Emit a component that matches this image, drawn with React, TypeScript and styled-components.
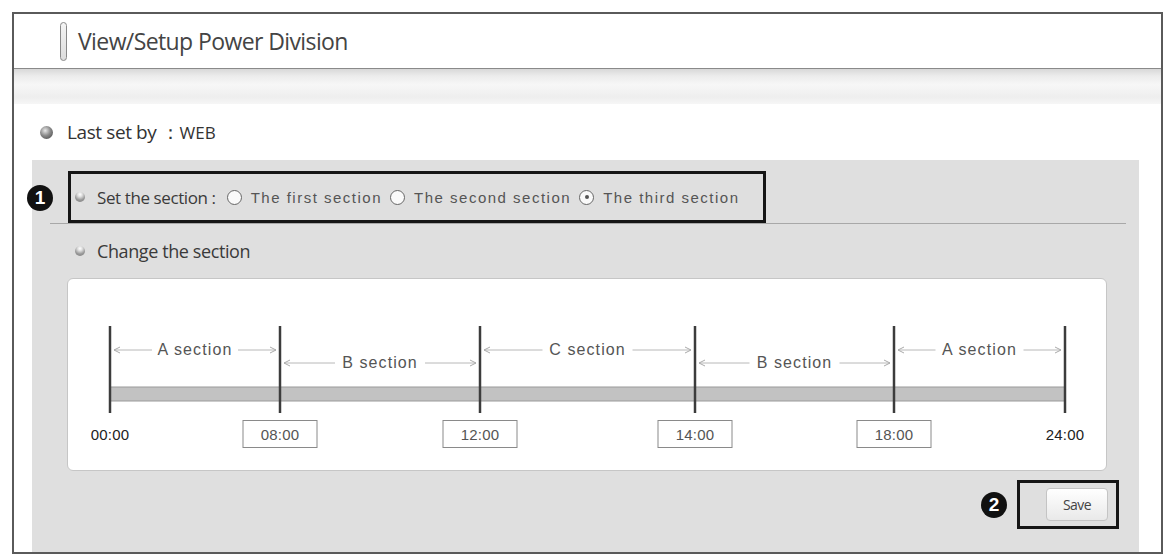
import React from 'react';
import styled, { createGlobalStyle } from 'styled-components';

const GlobalStyle = createGlobalStyle`
  body {
    margin: 0;
    background: #ffffff;
    font-family: "Open Sans", "Noto Sans", sans-serif;
    color: #333;
  }
`;

const Frame = styled.div`
  box-sizing: border-box;
  width: 1151px;
  height: 542px;
  margin: 12px 0 0 12px;
  border: 2px solid #5a5a5a;
  display: flex;
  flex-direction: column;
  background: #fff;
`;

const Header = styled.div`
  height: 54px;
  display: flex;
  align-items: center;
  gap: 11px;
  padding-left: 46px;
  border-bottom: 1px solid #8a8a8a;
`;

const TitlePill = styled.div`
  width: 5px;
  height: 37px;
  border: 1px solid #888;
  border-radius: 4px;
  background: linear-gradient(to bottom, #f4f4f4, #dcdcdc);
`;

const Title = styled.h1`
  margin: 0;
  font-size: 23px;
  font-weight: 400;
  letter-spacing: -0.6px;
  color: #444;
`;

const Band = styled.div`
  height: 35px;
  background: linear-gradient(
    to bottom,
    #d8d8d8 0%,
    #ececec 20%,
    #f7f7f7 45%,
    #eeeeee 80%,
    #f6f6f6 100%
  );
`;

const LastSetRow = styled.div`
  height: 56px;
  display: flex;
  align-items: center;
  gap: 14px;
  padding-left: 26px;
  font-size: 19px;
  letter-spacing: -0.4px;
  color: #333;
`;

const Small = styled.span`
  font-size: 17px;
  letter-spacing: 0;
`;

const Sphere = styled.span<{ $size: number; $tone: 'dark' | 'light' }>`
  display: inline-block;
  flex: none;
  width: ${(p) => p.$size}px;
  height: ${(p) => p.$size}px;
  border-radius: 50%;
  background: ${(p) =>
    p.$tone === 'dark'
      ? 'radial-gradient(circle at 40% 35%, #e8e8e8 0%, #8a8a8a 45%, #3e3e3e 100%)'
      : 'radial-gradient(circle at 50% 25%, #ffffff 0%, #e0e0e0 25%, #9a9a9a 60%, #7a7a7a 100%)'};
`;

const Panel = styled.div`
  position: relative;
  flex: 1;
  margin: 0 22px 0 18px;
  background: #dfdfdf;
  display: flex;
  flex-direction: column;
`;

const Badge = styled.span<{ $floating?: boolean }>`
  ${(p) => (p.$floating ? 'position: absolute; left: -5px; top: 25px;' : '')}
  width: 26px;
  height: 26px;
  border-radius: 50%;
  background: #111;
  color: #fff;
  display: flex;
  align-items: center;
  justify-content: center;
  font-family: "Liberation Sans", Arial, sans-serif;
  font-weight: 700;
  font-size: 19px;
`;

const SectionBox = styled.div`
  box-sizing: border-box;
  width: 698px;
  height: 52px;
  margin: 11px 0 0 36px;
  border: 3px solid #151515;
  display: flex;
  align-items: center;
  padding-left: 4px;
`;

const RowLabel = styled.span<{ $size: number }>`
  display: inline-flex;
  align-items: center;
  gap: 12px;
  font-size: ${(p) => p.$size}px;
  letter-spacing: -0.4px;
  color: #3a3a3a;
`;

const Option = styled.label`
  display: inline-flex;
  align-items: center;
  gap: 9px;
  margin-left: 8px;
  font-family: "Liberation Sans", Arial, sans-serif;
  font-size: 15px;
  letter-spacing: 1.5px;
  color: #555;
  &:first-of-type {
    margin-left: 11px;
  }
`;

const Radio = styled.span<{ $checked?: boolean }>`
  box-sizing: border-box;
  width: 15px;
  height: 15px;
  border-radius: 50%;
  border: 1.5px solid #666;
  background: #fafafa;
  display: inline-flex;
  align-items: center;
  justify-content: center;
  &::after {
    content: '';
    width: 4px;
    height: 4px;
    border-radius: 50%;
    background: ${(p) => (p.$checked ? '#555' : 'transparent')};
  }
`;

const Divider = styled.div`
  height: 1px;
  margin: 0 13px 0 18px;
  background: #a8a8a8;
`;

const ChangeRow = styled.div`
  height: 54px;
  display: flex;
  align-items: center;
  padding-left: 43px;
`;

const Card = styled.div`
  box-sizing: border-box;
  width: 1040px;
  height: 193px;
  margin-left: 35px;
  background: #fff;
  border: 1px solid #c6c6c6;
  border-radius: 6px;
  display: flex;
  flex-direction: column;
`;

const Chart = styled.svg`
  display: block;
  flex: none;
`;

const TimeRow = styled.div`
  position: relative;
  height: 30px;
`;

const TimeMark = styled.span<{ $boxed?: boolean }>`
  position: absolute;
  top: 0;
  transform: translateX(-50%);
  box-sizing: border-box;
  height: 28px;
  display: flex;
  align-items: center;
  justify-content: center;
  font-family: "Liberation Sans", Arial, sans-serif;
  font-size: 15px;
  letter-spacing: 0.2px;
  color: ${(p) => (p.$boxed ? '#555' : '#222')};
  width: ${(p) => (p.$boxed ? '75px' : 'auto')};
  border: ${(p) => (p.$boxed ? '1px solid #8a8a8a' : 'none')};
  background: #fff;
`;

const SaveRow = styled.div`
  display: flex;
  justify-content: flex-end;
  align-items: center;
  gap: 10px;
  margin: 9px 20px 0 0;
`;

const SaveFrame = styled.div`
  box-sizing: border-box;
  width: 102px;
  height: 49px;
  border: 3px solid #151515;
  display: flex;
  align-items: center;
  justify-content: flex-end;
  padding-right: 8px;
`;

const SaveButton = styled.button`
  width: 62px;
  height: 33px;
  border: 1px solid #c4c4c4;
  border-radius: 4px;
  background: linear-gradient(to bottom, #ffffff, #e9e9e9);
  font-family: "Open Sans", sans-serif;
  font-size: 14px;
  letter-spacing: -0.6px;
  color: #444;
  padding: 0;
`;

type Segment = { label: string; from: number; to: number; y: number; w: number };

const ticks = [42, 212, 412, 627, 826, 997];

const segments: Segment[] = [
  { label: 'A section', from: 42, to: 212, y: 71, w: 78 },
  { label: 'B section', from: 212, to: 412, y: 84, w: 82 },
  { label: 'C section', from: 412, to: 627, y: 71, w: 82 },
  { label: 'B section', from: 627, to: 826, y: 84, w: 82 },
  { label: 'A section', from: 826, to: 997, y: 71, w: 80 },
];

const times = [
  { t: '00:00', x: 42, boxed: false },
  { t: '08:00', x: 212, boxed: true },
  { t: '12:00', x: 412, boxed: true },
  { t: '14:00', x: 627, boxed: true },
  { t: '18:00', x: 826, boxed: true },
  { t: '24:00', x: 997, boxed: false },
];

const SegmentLabel: React.FC<{ s: Segment }> = ({ s }) => {
  const mid = (s.from + s.to) / 2;
  const a = s.from + 4;
  const b = s.to - 4;
  const l = mid - s.w / 2 - 4;
  const r = mid + s.w / 2 + 4;
  return (
    <g>
      <line x1={a} y1={s.y} x2={l} y2={s.y} stroke="#b8b8b8" strokeWidth="1" />
      <line x1={r} y1={s.y} x2={b} y2={s.y} stroke="#b8b8b8" strokeWidth="1" />
      <path d={`M${a + 6} ${s.y - 3} L${a} ${s.y} L${a + 6} ${s.y + 3}`} fill="none" stroke="#aaa" />
      <path d={`M${b - 6} ${s.y - 3} L${b} ${s.y} L${b - 6} ${s.y + 3}`} fill="none" stroke="#aaa" />
      <text
        x={mid}
        y={s.y + 5}
        textAnchor="middle"
        fontFamily="Liberation Sans, Arial, sans-serif"
        fontSize="16"
        letterSpacing="1.1"
        fill="#555"
      >
        {s.label}
      </text>
    </g>
  );
};

export default function App() {
  return (
    <>
      <GlobalStyle />
      <Frame>
        <Header>
          <TitlePill />
          <Title>View/Setup Power Division</Title>
        </Header>
        <Band />
        <LastSetRow>
          <Sphere $size={13} $tone="dark" />
          <span>
            Last set by ：<Small>WEB</Small>
          </span>
        </LastSetRow>
        <Panel>
          <Badge $floating>1</Badge>
          <SectionBox>
            <RowLabel $size={17}>
              <Sphere $size={10} $tone="light" />
              Set the section :
            </RowLabel>
            <Option>
              <Radio />
              The first section
            </Option>
            <Option>
              <Radio />
              The second section
            </Option>
            <Option>
              <Radio $checked />
              The third section
            </Option>
          </SectionBox>
          <Divider />
          <ChangeRow>
            <RowLabel $size={18}>
              <Sphere $size={10} $tone="light" />
              Change the section
            </RowLabel>
          </ChangeRow>
          <Card>
            <Chart width="1038" height="141" viewBox="0 0 1038 141">
              <rect x={42} y={108} width={955} height={14} fill="#c2c2c2" stroke="#9a9a9a" strokeWidth="1" />
              {ticks.map((x) => (
                <line key={x} x1={x} y1={47} x2={x} y2={134} stroke="#3c3c3c" strokeWidth="2.5" />
              ))}
              {segments.map((s, i) => (
                <SegmentLabel key={i} s={s} />
              ))}
            </Chart>
            <TimeRow>
              {times.map((m) => (
                <TimeMark key={m.t} $boxed={m.boxed} style={{ left: m.x }}>
                  {m.t}
                </TimeMark>
              ))}
            </TimeRow>
          </Card>
          <SaveRow>
            <Badge>2</Badge>
            <SaveFrame>
              <SaveButton>Save</SaveButton>
            </SaveFrame>
          </SaveRow>
        </Panel>
      </Frame>
    </>
  );
}
